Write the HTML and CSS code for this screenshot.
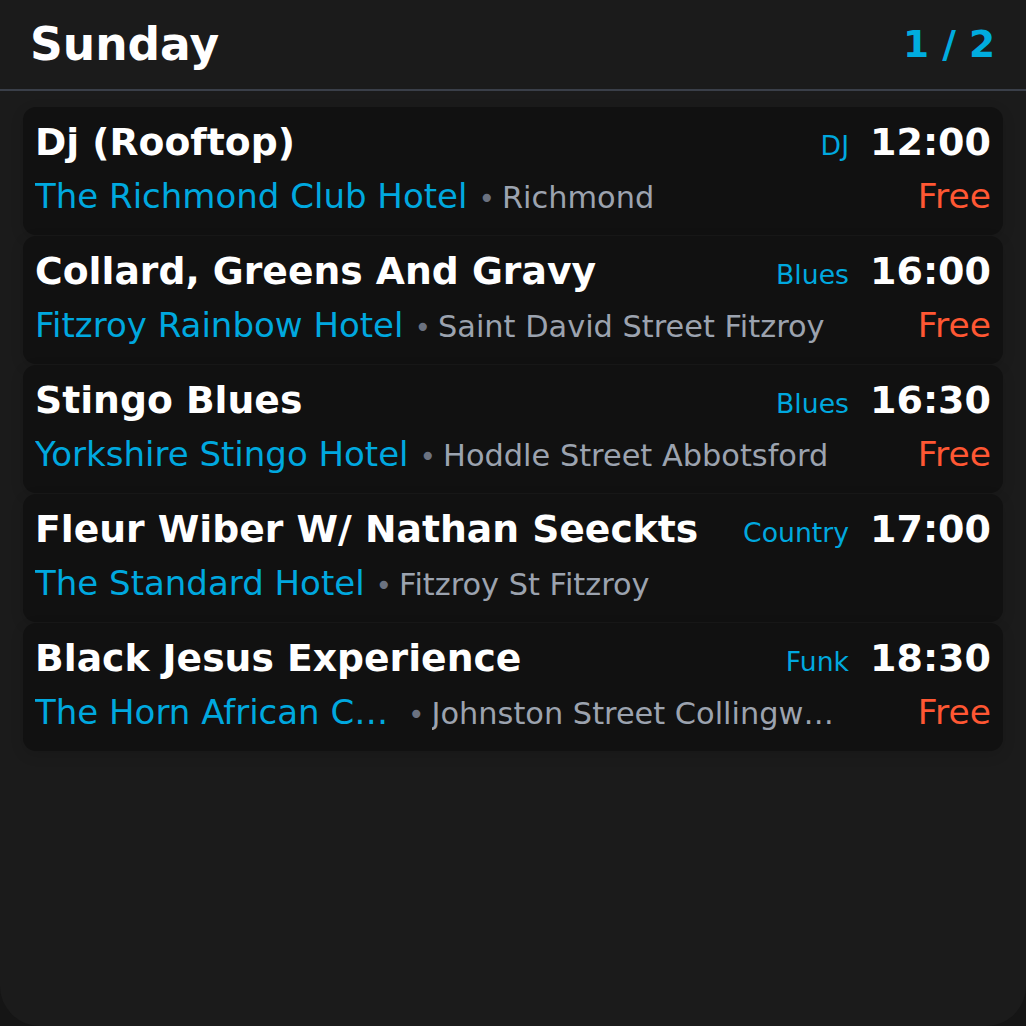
FILE: index.html
```html
<!DOCTYPE html>
<html lang="en">
<head>
<meta charset="utf-8">
<title>Sunday</title>
<link rel="stylesheet" href="styles.css">
</head>
<body>
<div class="screen">
  <header class="header">
    <h1 class="day">Sunday</h1>
    <div class="pager">1 / 2</div>
  </header>
  <div class="list">
    <div class="card">
      <div class="row top">
        <div class="title">Dj (Rooftop)</div>
        <div class="genre">DJ</div>
        <div class="time">12:00</div>
      </div>
      <div class="row bottom">
        <div class="where"><span class="venue">The Richmond Club Hotel</span><span class="dot">•</span><span class="loc">Richmond</span></div>
        <div class="price">Free</div>
      </div>
    </div>
    <div class="card">
      <div class="row top">
        <div class="title">Collard, Greens And Gravy</div>
        <div class="genre">Blues</div>
        <div class="time">16:00</div>
      </div>
      <div class="row bottom">
        <div class="where"><span class="venue">Fitzroy Rainbow Hotel</span><span class="dot">•</span><span class="loc">Saint David Street Fitzroy</span></div>
        <div class="price">Free</div>
      </div>
    </div>
    <div class="card">
      <div class="row top">
        <div class="title">Stingo Blues</div>
        <div class="genre">Blues</div>
        <div class="time">16:30</div>
      </div>
      <div class="row bottom">
        <div class="where"><span class="venue">Yorkshire Stingo Hotel</span><span class="dot">•</span><span class="loc">Hoddle Street Abbotsford</span></div>
        <div class="price">Free</div>
      </div>
    </div>
    <div class="card">
      <div class="row top">
        <div class="title">Fleur Wiber W/ Nathan Seeckts</div>
        <div class="genre">Country</div>
        <div class="time">17:00</div>
      </div>
      <div class="row bottom">
        <div class="where"><span class="venue">The Standard Hotel</span><span class="dot">•</span><span class="loc">Fitzroy St Fitzroy</span></div>
      </div>
    </div>
    <div class="card">
      <div class="row top">
        <div class="title">Black Jesus Experience</div>
        <div class="genre">Funk</div>
        <div class="time">18:30</div>
      </div>
      <div class="row bottom">
        <div class="where"><span class="venue trunc">The Horn African Cafe &amp; Restaurant</span><span class="dot">•</span><span class="loc">Johnston Street Collingwood Victoria</span></div>
        <div class="price">Free</div>
      </div>
    </div>
  </div>
</div>
</body>
</html>
```
FILE: styles.css
```css
* { box-sizing: border-box; }
html, body {
  margin: 0;
  padding: 0;
  background: #151515;
}
body {
  font-family: "DejaVu Sans", "Liberation Sans", sans-serif;
  color: #ffffff;
}
.screen {
  width: 1026px;
  height: 1026px;
  background: #1b1b1b;
  border-radius: 0 0 40px 40px;
  overflow: hidden;
}
.header {
  height: 91px;
  display: flex;
  align-items: center;
  justify-content: space-between;
  padding: 1px 31px 1px 30px;
  border-bottom: 2px solid #3a3f49;
}
.day {
  margin: 0;
  font-size: 45.5px;
  font-weight: bold;
  line-height: 1;
  color: #ffffff;
}
.pager {
  font-size: 37.5px;
  font-weight: bold;
  line-height: 1;
  color: #00acdf;
}
.list {
  padding: 16px 23px 0 23px;
  display: flex;
  flex-direction: column;
  gap: 1px;
}
.card {
  background: #111111;
  border-radius: 13px;
  height: 128px;
  padding: 12px 12px 0 12px;
  box-shadow: 0 4px 14px rgba(0, 0, 0, 0.12);
}
.row {
  display: flex;
  align-items: baseline;
  white-space: nowrap;
}
.row.top { height: 46px; line-height: 46px; }
.row.bottom { height: 40px; line-height: 40px; margin-top: 11px; }
.title {
  flex: 1 1 auto;
  min-width: 0;
  overflow: hidden;
  text-overflow: ellipsis;
  font-size: 37.7px;
  font-weight: bold;
}
.genre {
  flex: none;
  font-size: 26.7px;
  color: #00a8df;
  margin-left: 20px;
}
.time {
  flex: none;
  font-size: 38px;
  font-weight: bold;
  margin-left: 21px;
}
.where {
  flex: 1 1 auto;
  min-width: 0;
  display: flex;
  align-items: baseline;
  overflow: hidden;
}
.venue {
  flex: none;
  font-size: 34px;
  color: #00a8df;
}
.venue.trunc {
  flex: 0 0 362px;
  overflow: hidden;
  text-overflow: ellipsis;
}
.dot {
  flex: none;
  font-size: 28px;
  color: #6b7280;
  margin: 0 7px 0 11px;
}
.loc {
  flex: 0 1 auto;
  min-width: 0;
  max-width: 410px;
  overflow: hidden;
  text-overflow: ellipsis;
  font-size: 30.4px;
  color: #9ca3af;
}
.price {
  flex: none;
  font-size: 34.5px;
  color: #ff5733;
  margin-left: 20px;
}
```
